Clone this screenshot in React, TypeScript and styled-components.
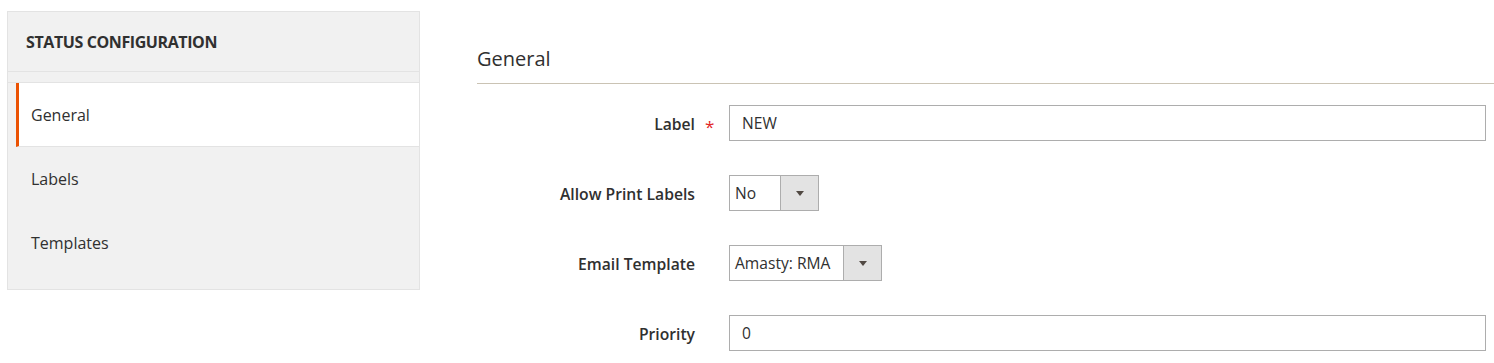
import * as React from 'react'
import styled, { createGlobalStyle } from 'styled-components'

const Global = createGlobalStyle`
  body {
    margin: 0;
    background: #fff;
    font-family: 'Open Sans', 'Noto Sans', sans-serif;
    color: #303030;
  }
`

const navItems = ['General', 'Labels', 'Templates']

export default function App() {
  return (
    <>
      <Global />
      <Page>
        <Sidebar>
          <SidebarTitle>Status Configuration</SidebarTitle>
          <NavList>
            {navItems.map((item, i) => (
              <NavItem key={item} $active={i === 0}>
                {item}
              </NavItem>
            ))}
          </NavList>
        </Sidebar>

        <Content>
          <SectionTitle>General</SectionTitle>
          <Form>
            <FieldLabel>Label</FieldLabel>
            <Required>*</Required>
            <TextInput readOnly value="NEW" />

            <FieldLabel>Allow Print Labels</FieldLabel>
            <Required />
            <Select $width={90}>
              <SelectValue>No</SelectValue>
              <SelectArrow />
            </Select>

            <FieldLabel>Email Template</FieldLabel>
            <Required />
            <Select $width={153}>
              <SelectValue>Amasty: RMA</SelectValue>
              <SelectArrow />
            </Select>

            <FieldLabel>Priority</FieldLabel>
            <Required />
            <TextInput readOnly value="0" />
          </Form>
        </Content>
      </Page>
    </>
  )
}

const Page = styled.div`
  display: flex;
  align-items: flex-start;
  padding: 11px 0 0 7px;
`

const Sidebar = styled.aside`
  width: 411px;
  flex: none;
  background: #f1f1f1;
  border: 1px solid #e3e3e3;
  padding-bottom: 14px;
`

const SidebarTitle = styled.div`
  height: 59px;
  display: flex;
  align-items: center;
  padding-left: 18px;
  border-bottom: 1px solid #e3e3e3;
  font-size: 16px;
  font-weight: 700;
  letter-spacing: -0.4px;
  text-transform: uppercase;
  color: #303030;
`

const NavList = styled.div`
  margin-top: 10px;
  border-top: 1px solid #e3e3e3;
`

const NavItem = styled.div<{ $active?: boolean }>`
  height: 64px;
  box-sizing: border-box;
  display: flex;
  align-items: center;
  margin-left: 8px;
  padding-left: ${(p) => (p.$active ? '12px' : '15px')};
  font-size: 16px;
  color: #303030;
  ${(p) =>
    p.$active &&
    `
    background: #fff;
    border-left: 3px solid #eb5202;
    border-bottom: 1px solid #e3e3e3;
  `}
`

const Content = styled.main`
  flex: 1;
  margin-left: 57px;
  margin-top: 34px;
`

const SectionTitle = styled.h2`
  margin: 0;
  font-size: 20px;
  line-height: 28px;
  font-weight: 400;
  color: #303030;
  padding-bottom: 10px;
  border-bottom: 1px solid #cac3b4;
`

const Form = styled.div`
  display: grid;
  grid-template-columns: 218px 34px 1fr;
  grid-auto-rows: 36px;
  row-gap: 34px;
  align-items: center;
  margin-top: 21px;
  padding-right: 8px;
`

const FieldLabel = styled.label`
  text-align: right;
  font-size: 15.7px;
  font-weight: 600;
  color: #303030;
  padding-top: 2px;
`

const Required = styled.span`
  padding-left: 10px;
  font-size: 17px;
  color: #e22626;
  line-height: 1;
  padding-top: 6px;
`

const TextInput = styled.input`
  box-sizing: border-box;
  height: 36px;
  width: 100%;
  border: 1px solid #adadad;
  padding: 0 12px;
  font-family: 'Open Sans', 'Noto Sans', sans-serif;
  font-size: 15.6px;
  color: #303030;
  outline: none;
`

const Select = styled.div<{ $width: number }>`
  box-sizing: border-box;
  display: flex;
  height: 36px;
  width: ${(p) => p.$width}px;
  border: 1px solid #adadad;
  background: #fff;
`

const SelectValue = styled.span`
  flex: 1;
  display: flex;
  align-items: center;
  padding-left: 5px;
  font-size: 15.6px;
  color: #303030;
`

const SelectArrow = styled.span`
  width: 37px;
  flex: none;
  background: #e3e3e3;
  border-left: 1px solid #adadad;
  display: flex;
  align-items: center;
  justify-content: center;
  &::after {
    content: '';
    border-left: 4px solid transparent;
    border-right: 4px solid transparent;
    border-top: 5px solid #514943;
  }
`
